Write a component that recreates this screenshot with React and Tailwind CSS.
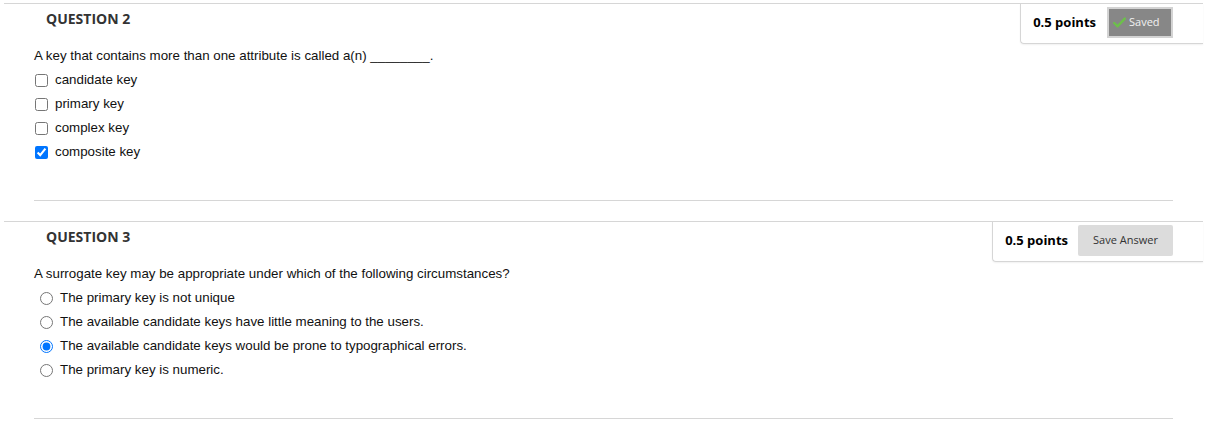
import React from 'react';

const questions = [
  {
    id: 2,
    type: 'checkbox',
    prompt: 'A key that contains more than one attribute is called a(n) ________.',
    options: ['candidate key', 'primary key', 'complex key', 'composite key'],
    selected: 3,
    saved: true,
  },
  {
    id: 3,
    type: 'radio',
    prompt: 'A surrogate key may be appropriate under which of the following circumstances?',
    options: [
      'The primary key is not unique',
      'The available candidate keys have little meaning to the users.',
      'The available candidate keys would be prone to typographical errors.',
      'The primary key is numeric.',
    ],
    selected: 2,
    saved: false,
  },
];

const SavedButton = () => (
  <div className="flex h-[31px] w-[66px] items-center gap-[3px] border-2 border-[#d3d3d3] bg-[#878787] pl-[4px] text-[11px] text-[#f2f2f2]">
    <svg width="13" height="11" viewBox="0 0 13 11">
      <path d="M1.2 6 L4.6 9.3 L11.8 1.6" fill="none" stroke="#6cc04a" strokeWidth="2.4" strokeLinecap="round" strokeLinejoin="round" />
    </svg>
    <span>Saved</span>
  </div>
);

const SaveAnswerButton = () => (
  <div className="flex h-[31px] w-[95px] items-center justify-center rounded-[2px] bg-[#dcdcdc] text-[11px] text-[#333]">
    Save Answer
  </div>
);

const Question = ({ q }) => (
  <div className="border-t border-[#d6d6d6]">
    {/* Header */}
    <div className="flex items-start justify-between">
      <h2 className="pl-[42px] pt-[5px] text-[14px] font-bold leading-5 text-[#333]">
        QUESTION {q.id}
      </h2>
      <div className={`flex h-[40px] items-start rounded-bl-[4px] border-b border-l border-[#d6d6d6] pl-[12px] pr-[30px] pt-[3px] shadow-[0_1px_2px_rgba(0,0,0,0.06)] ${q.saved ? 'gap-[11px]' : 'gap-[10px]'}`}>
        <span className="flex h-[31px] items-center text-[13px] font-bold text-black">0.5 points</span>
        {q.saved ? <SavedButton /> : <SaveAnswerButton />}
      </div>
    </div>

    {/* Body */}
    <div className="px-[30px] font-['Liberation_Sans',Arial,sans-serif] text-[13.33px] text-[#111]">
      <p className="flex h-6 items-center">{q.prompt}</p>
      {q.options.map((opt, i) => (
        <label key={opt} className="flex h-6 items-center">
          {q.type === 'checkbox' ? (
            <input
              type="checkbox"
              readOnly
              checked={i === q.selected}
              className="m-0 ml-[1px] mr-[7px] h-[13px] w-[13px]"
            />
          ) : (
            <input
              type="radio"
              readOnly
              checked={i === q.selected}
              name={`q${q.id}`}
              className="m-0 ml-[6px] mr-[7px] h-[13px] w-[13px]"
            />
          )}
          <span>{opt}</span>
        </label>
      ))}
      <div className="mt-[36px] border-b border-[#d6d6d6]" />
    </div>
  </div>
);

export default function App() {
  return (
    <div className="min-h-[421px] bg-white font-['Open_Sans',sans-serif]">
      <div className="ml-1 mr-3 flex flex-col gap-[20px] pt-[3px]">
        {questions.map((q) => (
          <Question key={q.id} q={q} />
        ))}
      </div>
    </div>
  );
}
